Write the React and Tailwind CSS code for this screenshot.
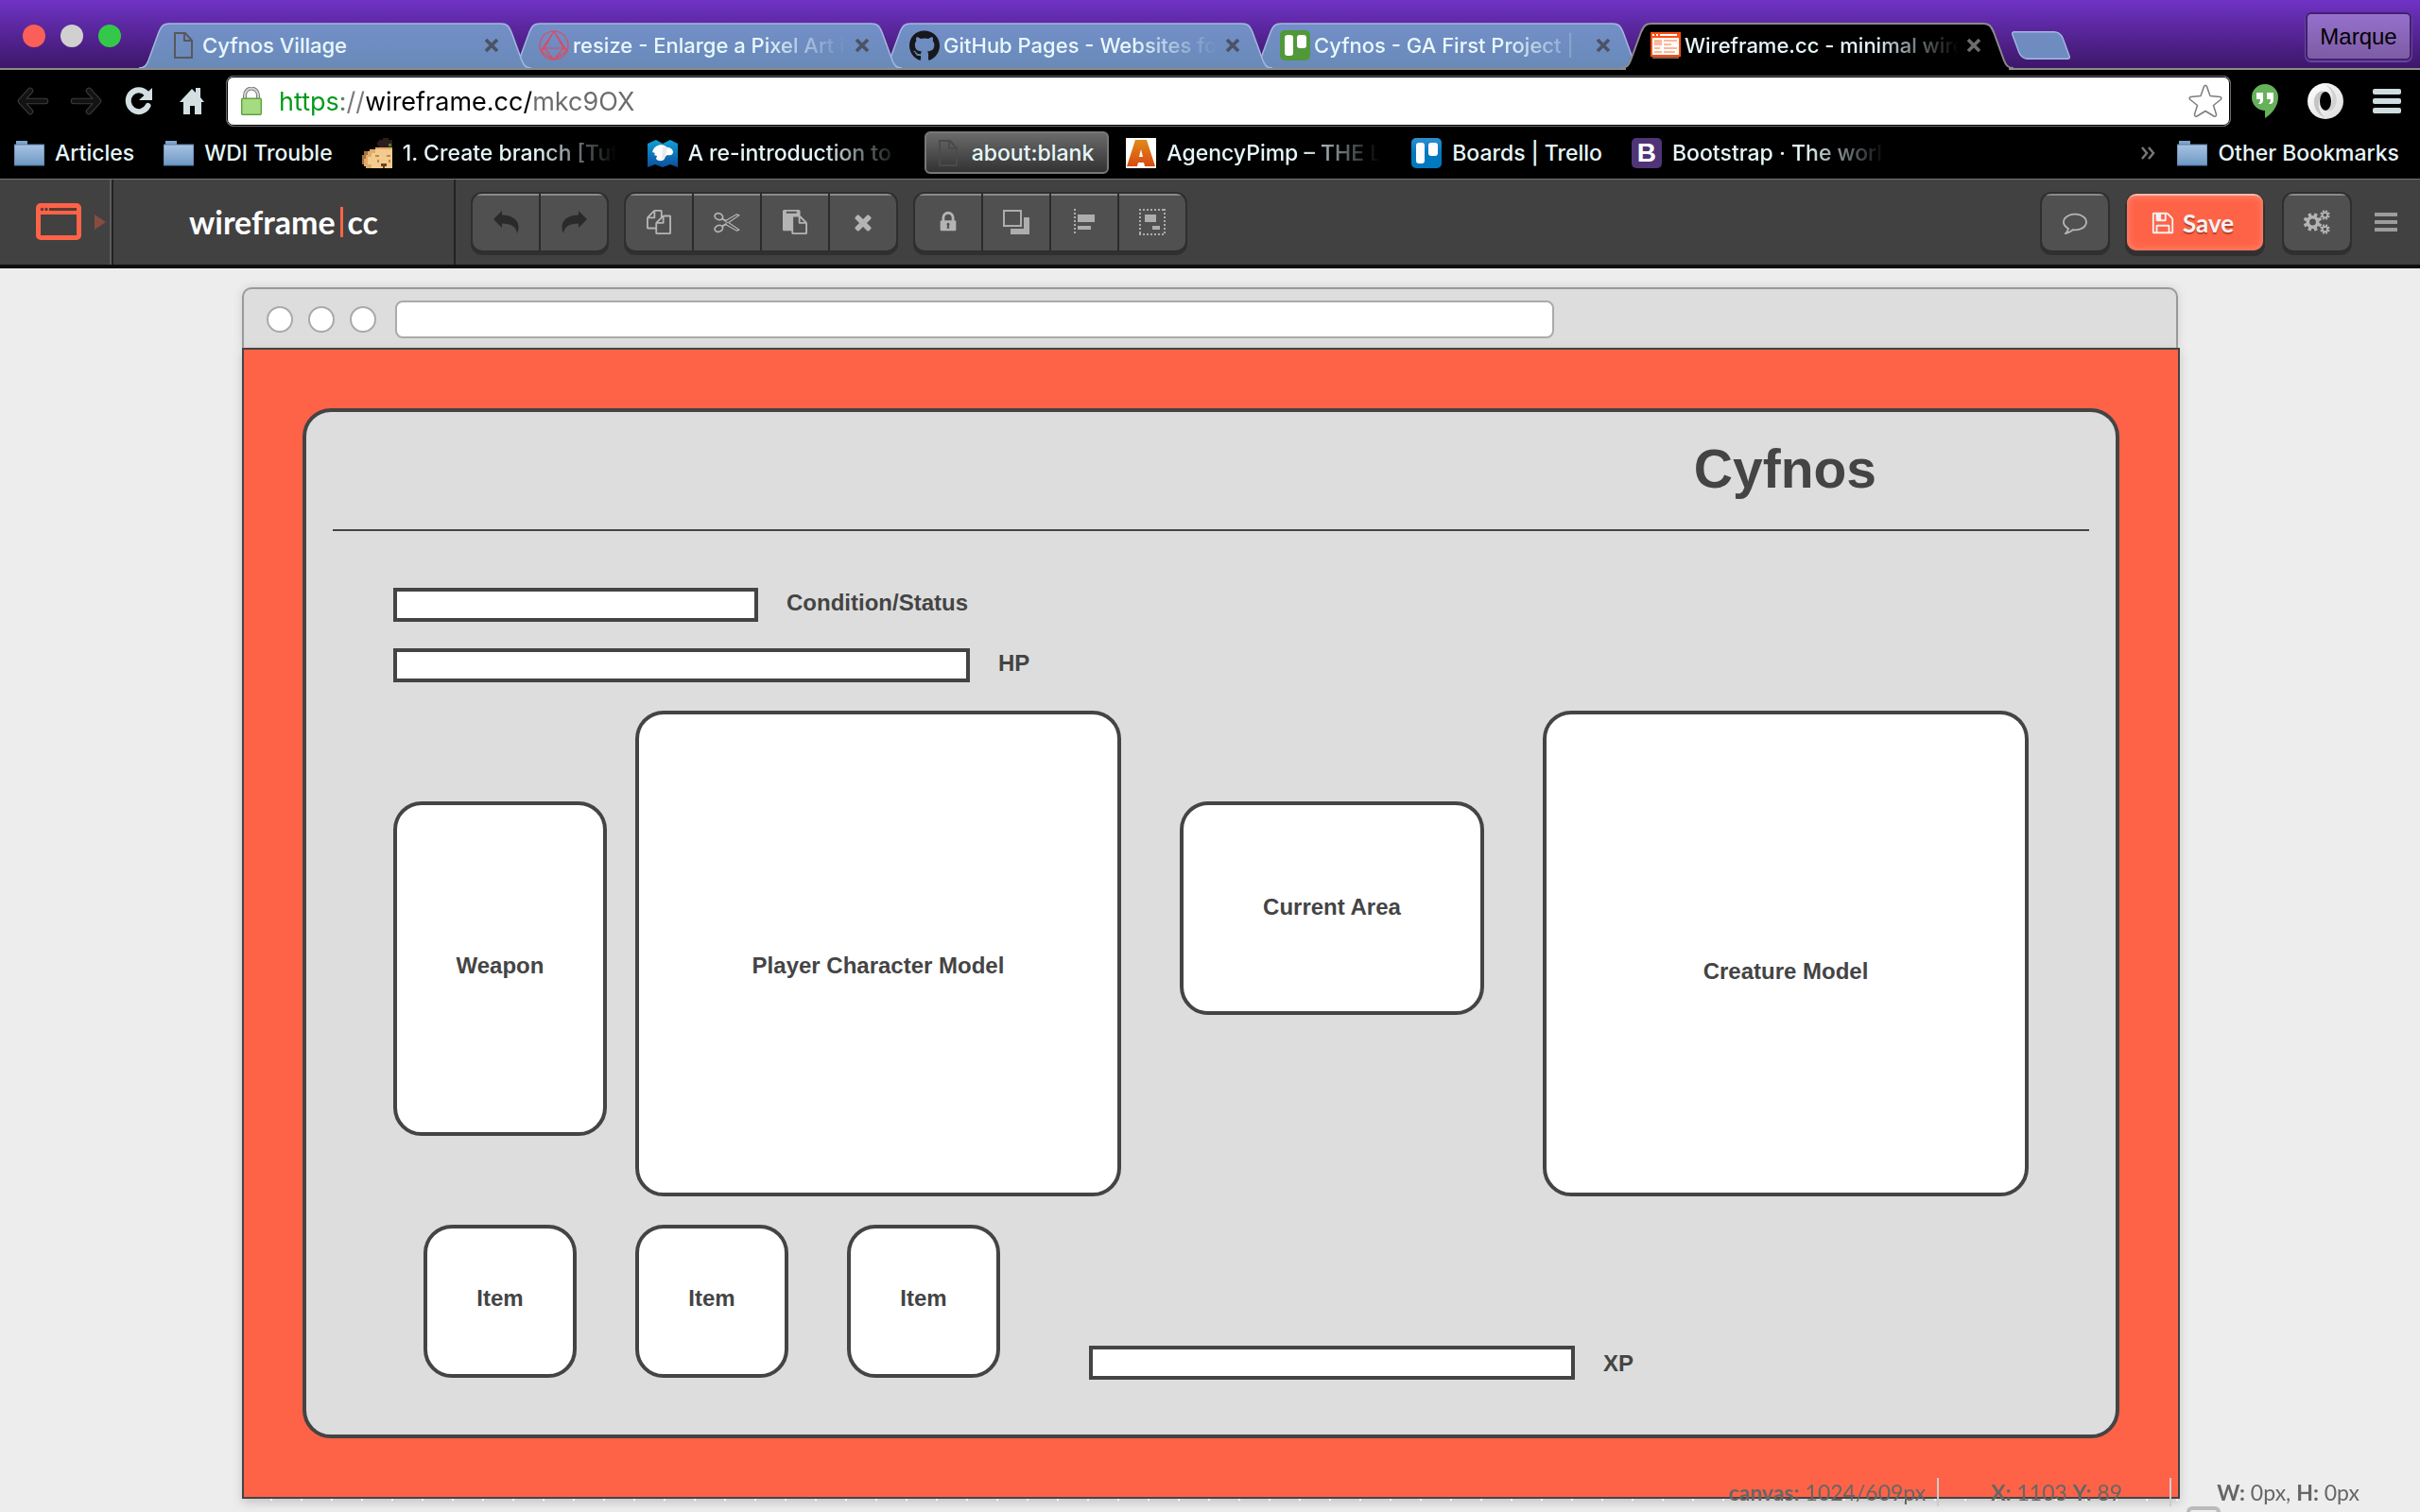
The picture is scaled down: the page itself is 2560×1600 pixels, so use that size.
import React from "react";
import { FaGithub } from "react-icons/fa";

const UI = "font-['Inter',sans-serif]";

/* ---------- browser icons ---------- */

const PageIcon = ({ color = "#57585c" }) => (
  <svg width="32" height="32" viewBox="0 0 32 32" fill="none" stroke={color} strokeWidth="2" aria-hidden="true">
    <path d="M7 3h11l7 8v18H7z" />
    <path d="M17 3v8h8" />
  </svg>
);

const PolyhedronIcon = () => (
  <svg width="32" height="32" viewBox="0 0 32 32" fill="none" stroke="#e0485f" strokeWidth="1.2" aria-hidden="true">
    <circle cx="16" cy="16" r="15" />
    <path d="M16 1L6 19l10 12 10-12zM16 1L2 22M16 1l14 21M6 19h20M2 22l14 9 14-9M2 22l4-3M30 22l-4-3" />
  </svg>
);

const TrelloIcon = ({ from, to }) => (
  <svg width="32" height="32" viewBox="0 0 32 32" aria-hidden="true">
    <defs>
      <linearGradient id={"trello" + to.slice(1)} x1="0" y1="0" x2="0" y2="1">
        <stop offset="0" stopColor={from} />
        <stop offset="0.5" stopColor={to} />
      </linearGradient>
    </defs>
    <rect width="32" height="32" rx="5" fill={"url(#trello" + to.slice(1) + ")"} />
    <rect x="5" y="5" width="9" height="22" rx="3" fill="#fff" />
    <rect x="18" y="5" width="10" height="14" rx="3" fill="#fff" />
  </svg>
);

const WireframeFavicon = () => (
  <svg width="32" height="32" viewBox="0 0 32 32" shapeRendering="crispEdges" aria-hidden="true">
    <path d="M2 28h28v2H2z" fill="#8a5a4a" />
    <path d="M0 2h32v26H0z" fill="#ff4f12" />
    <path d="M2 8h28v18H2zM2 4h2v2H2zM6 4h2v2H6zM10 4h18v2H10z" fill="#fff" />
    <path d="M4 10h8v6H4zM14 10h14v2H14zM14 14h8v2h-8zM4 18h6v2H4zM14 18h14v2H14zM4 22h8v2H4zM14 22h12v2H14z" fill="#ffb798" />
  </svg>
);

const FolderIcon = () => (
  <svg width="32" height="28" viewBox="0 0 32 28" aria-hidden="true">
    <defs>
      <linearGradient id="folder" x1="0" y1="0" x2="0" y2="1">
        <stop offset="0" stopColor="#a9c3e2" />
        <stop offset="1" stopColor="#6d98c4" />
      </linearGradient>
    </defs>
    <path d="M2 1h12v5H2z" fill="#7fa3cd" />
    <path d="M0 5h32v22H0z" fill="url(#folder)" stroke="#557ca6" strokeWidth="1" />
  </svg>
);

const CritterIcon = () => (
  <svg width="32" height="32" viewBox="0 0 32 32" shapeRendering="crispEdges" aria-hidden="true">
    <path d="M18 2h4V0h6v2h4v8H18V8h-2V4h2z" fill="#2b1d1c" />
    <path d="M28 6h3v3h-3z" fill="#4c7a2e" />
    <path d="M14 10h18v22H4v-2H2v-4H0v-8h2v-4h6v-2h6z" fill="#e0ab6a" />
    <path d="M14 12h18v20H10v-4H6v-8h4v-4h4z" fill="#f3cb8e" />
    <path d="M0 18h2v-4h4v4H4v4H2v6H0z" fill="#a8713c" />
    <path d="M14 18h4v2h-4zM26 18h4v2h-4zM16 23h2v3h-2zM28 23h2v3h-2z" fill="#b98850" />
    <path d="M20 27h6v3h-2v2h-2v-2h-2z" fill="#6b3f24" />
  </svg>
);

const DinoIcon = () => (
  <svg width="32" height="32" viewBox="0 0 32 32" aria-hidden="true">
    <defs>
      <linearGradient id="dino" x1="0" y1="0" x2="0" y2="1">
        <stop offset="0" stopColor="#10a0d8" />
        <stop offset="1" stopColor="#0d4f9e" />
      </linearGradient>
    </defs>
    <path d="M0 6l9-4 7 4 8-4 8 4v25l-8-3-8 3-8-3-8 3z" fill="url(#dino)" />
    <path d="M9 9c4-3 9-2 12 1 3 0 6 2 6 5 0 2-2 4-5 3-2 0-3 1-4 4-2 3-7 3-9 0l1-3-3-1 1-2-3-1c1-3 2-5 4-6z" fill="#fff" />
    <path d="M16 9l5 1-2 9-4 4z" fill="#e6e9ee" />
  </svg>
);

const BlockAIcon = () => (
  <span className="flex h-8 w-8 items-center justify-center bg-white">
    <svg width="30" height="28" viewBox="0 0 30 28" aria-hidden="true">
      <defs>
        <linearGradient id="block" x1="0" y1="0" x2="0" y2="1">
          <stop offset="0" stopColor="#e08a1c" />
          <stop offset="1" stopColor="#d94a10" />
        </linearGradient>
      </defs>
      <polygon points="9,0 21,0 30,28 19,28 18,24 12,24 11,28 0,28" fill="url(#block)" />
      <polygon points="15,10 17,18 13,18" fill="#fff" />
    </svg>
  </span>
);

const BIcon = () => (
  <span className="flex h-8 w-8 items-center justify-center rounded-[5px] bg-[#4f3577] font-['Liberation_Sans',sans-serif] text-[28px] leading-8 font-bold text-white">
    B
  </span>
);

const CloseIcon = ({ active }) => (
  <svg width="16" height="16" viewBox="0 0 16 16" aria-hidden="true">
    <path d="M2 2l12 12M14 2L2 14" stroke={active ? "#6d6d6d" : "#4b5263"} strokeWidth="3.6" />
  </svg>
);

/* ---------- tabs ---------- */

const TAB_PATH =
  "M0 48C6 48 8 45 10 40L21 10C24 3 26 1 32 1H383C389 1 391 3 394 10L405 40C407 45 409 48 415 48";

function Tab({ icon, title, layer, active, fade = true }) {
  return (
    <div className={"relative -mr-[23px] flex h-12 min-w-0 max-w-[415px] flex-1 items-center pr-[30px] pl-[31px] " + layer}>
      <svg
        className={active ? "absolute top-0 left-0 h-[50px] w-full" : "absolute inset-0 h-full w-full"}
        viewBox={active ? "0 0 415 50" : "0 0 415 48"}
        preserveAspectRatio="none"
        aria-hidden="true"
      >
        <defs>
          <linearGradient id="tabfill" x1="0" y1="0" x2="0" y2="1">
            <stop offset="0" stopColor="#738fc8" />
            <stop offset="1" stopColor="#698ab8" />
          </linearGradient>
        </defs>
        {active && <path d="M5 47h405v3H5z" fill="#000" />}
        <path
          d={TAB_PATH}
          fill={active ? "#000" : "url(#tabfill)"}
          stroke={active ? "#8b8b8b" : "#a5b8de"}
          strokeWidth={active ? 2 : 1.5}
        />
      </svg>
      <span className="relative flex h-8 w-8 shrink-0 items-center justify-center">{icon}</span>
      <span
        className={
          "relative ml-1 min-w-0 overflow-hidden text-[22px] leading-8 font-medium whitespace-nowrap text-[#e8f8fc] " +
          (fade ? "[mask-image:linear-gradient(to_right,black_200px,transparent_290px)]" : "")
        }
      >
        {title}
      </span>
      <button type="button" aria-label={"Close " + title} className="relative ml-auto flex h-6 w-6 shrink-0 items-center justify-center">
        <CloseIcon active={active} />
      </button>
    </div>
  );
}

function TabStrip() {
  return (
    <header className="flex h-[74px] items-stretch border-b-2 border-[#8b8b8b] bg-linear-to-b from-[#7033c6] to-[#3d1769]">
      <div className="mt-[26px] mr-[19px] ml-6 flex h-6 shrink-0 gap-4">
        <button type="button" aria-label="Close window" className="h-6 w-6 rounded-full bg-[#fc5f58]" />
        <button type="button" aria-label="Minimise window" className="h-6 w-6 rounded-full bg-[#d0d0d0]" />
        <button type="button" aria-label="Zoom window" className="h-6 w-6 rounded-full bg-[#34c84a]" />
      </div>
      <nav aria-label="Tabs" className="mt-6 flex min-w-0 flex-1">
        <Tab layer="z-40" icon={<PageIcon />} title="Cyfnos Village" fade={false} />
        <Tab layer="z-30" icon={<PolyhedronIcon />} title="resize - Enlarge a Pixel Art i" />
        <Tab layer="z-20" icon={<FaGithub size={33} color="#16181c" />} title="GitHub Pages - Websites fo" />
        <Tab layer="z-10" icon={<TrelloIcon from="#519839" to="#519839" />} title="Cyfnos - GA First Project |" />
        <Tab layer="z-50" icon={<WireframeFavicon />} title="Wireframe.cc - minimal wire" active />
        <button type="button" aria-label="New tab" className="mt-[9px] ml-[21px] h-[30px] w-[62px] shrink-0">
          <svg width="62" height="30" viewBox="0 0 62 30" aria-hidden="true">
            <path d="M3 .7H45C50 .7 52 3 54 7L61 26C62 28 61 29.300 59 29.300H17C12 29.300 10 27 8 23L1 4C0 2 1 .7 3 .7Z" fill="#6e8cc0" stroke="#a5b8de" strokeWidth="1.4" />
          </svg>
        </button>
      </nav>
      <button
        type="button"
        className="mt-[13px] mr-[9px] h-[51px] w-28 shrink-0 rounded-md border-2 border-[#43206f] bg-linear-to-b from-[#9670cd] to-[#7d5ca4] font-['Liberation_Sans',sans-serif] text-[24px] text-black shadow-[0_1px_0_1px_#6a44a0]"
      >
        Marque
      </button>
    </header>
  );
}

/* ---------- address bar ---------- */

const NavButton = ({ label, children }) => (
  <button type="button" aria-label={label} className="flex h-9 w-9 items-center justify-center">
    {children}
  </button>
);

function AddressBar() {
  return (
    <div className="flex h-[62px] items-center bg-black pt-1 pr-5 pl-[17px]">
      <div className="mr-[18px] flex shrink-0 gap-5">
        <NavButton label="Back">
          <svg width="34" height="30" viewBox="0 0 34 30" fill="none" strokeLinecap="round" strokeLinejoin="round" aria-hidden="true">
            <path d="M14 4L4 15l10 11M5 15h25" stroke="#3c3c3c" strokeWidth="6.500" />
            <path d="M14 4L4 15l10 11M5 15h25" stroke="#131313" strokeWidth="4.500" />
          </svg>
        </NavButton>
        <NavButton label="Forward">
          <svg width="34" height="30" viewBox="0 0 34 30" fill="none" strokeLinecap="round" strokeLinejoin="round" aria-hidden="true">
            <path d="M20 4l10 11-10 11M29 15H4" stroke="#3c3c3c" strokeWidth="6.500" />
            <path d="M20 4l10 11-10 11M29 15H4" stroke="#131313" strokeWidth="4.500" />
          </svg>
        </NavButton>
        <NavButton label="Reload">
          <svg width="30" height="30" viewBox="0 0 30 30" aria-hidden="true">
            <path d="M23 7A11 11.500 0 1 0 24.500 20" fill="none" stroke="#d3dfe2" strokeWidth="6" strokeLinecap="round" />
            <path d="M29 1v13H15z" fill="#d3dfe2" />
          </svg>
        </NavButton>
        <NavButton label="Home">
          <svg width="26" height="30" viewBox="0 0 26 30" fill="#d3dfe2" aria-hidden="true">
            <path d="M13 2l4 4V1h5v10l4 5h-3v13h-7v-9h-5v9H4V16H0z" />
          </svg>
        </NavButton>
      </div>
      <div className="flex h-[54px] min-w-0 flex-1 items-center rounded-lg border border-[#6a6a6a] bg-white pr-2 pl-[15px] outline-1 -outline-offset-2 outline-black">
        <svg width="22" height="30" viewBox="0 0 22 30" className="shrink-0" aria-hidden="true">
          <path d="M4 13V9a7 7.500 0 0 1 14 0v4" fill="none" stroke="#7d7d7d" strokeWidth="4" />
          <path d="M4 13V9a7 7.500 0 0 1 14 0v4" fill="none" stroke="#d4d4d4" strokeWidth="2" />
          <rect x=".7" y="12.200" width="20.600" height="17" rx="1" fill="#a5dc7f" stroke="#5fa142" strokeWidth="1.400" />
        </svg>
        <input
          type="text"
          aria-label="Address"
          defaultValue="https://wireframe.cc/mkc9OX"
          className="ml-[18px] h-11 min-w-0 flex-1 bg-[linear-gradient(to_right,#009a17_67px,#777_67px,#777_93px,#000_93px,#000_269px,#6b6b6b_269px)] bg-clip-text text-[27px] text-transparent outline-none"
        />
        <button type="button" aria-label="Bookmark this page" className="flex h-9 w-9 shrink-0 items-center justify-center">
          <svg width="36" height="36" viewBox="0 0 36 36" fill="#fff" stroke="#7c7c7c" strokeWidth="1.500" strokeLinejoin="round" aria-hidden="true">
            <path d="M16.500 2.500Q18 0 19.500 2.500L23 12.500 33.500 13.500Q36 14.500 34 16.500L26.500 22.500 29.500 32Q29.500 35 27 34L18 28.500 9 34Q6.500 35 6.500 32L9.500 22.500 2 16.500Q0 14.500 2.500 13.500L13 12.500Z" />
          </svg>
        </button>
      </div>
      <div className="ml-[22px] flex shrink-0 items-center gap-[31px]">
        <button type="button" aria-label="Hangouts">
          <svg width="28" height="36" viewBox="0 0 28 36" aria-hidden="true">
            <path d="M14 0a14 14 0 0 1 14 14c0 9-6 17-14 22v-8A14 14 0 0 1 14 0z" fill="#65b25a" />
            <path d="M5 9h7v8q0 3-3 4H7q2-2 2-5H5zM16 9h7v8q0 3-3 4h-2q2-2 2-5h-4z" fill="#fff" />
          </svg>
        </button>
        <button type="button" aria-label="JSON viewer">
          <svg width="38" height="38" viewBox="0 0 38 38" aria-hidden="true">
            <defs>
              <linearGradient id="ring" x1="0" y1="0" x2="1" y2="1">
                <stop offset="0" stopColor="#fff" />
                <stop offset="1" stopColor="#dcdcdc" />
              </linearGradient>
            </defs>
            <circle cx="19" cy="19" r="19" fill="url(#ring)" />
            <path d="M19 9c-8-3-15 6-11 17 2 5 6 9 11 10C10 31 9 15 19 9z" fill="#c4c4c4" />
            <path d="M19 29c8 3 14-6 11-16-2-6-6-10-11-11 10 6 10 21 0 27z" fill="#d2d2d2" />
            <ellipse cx="19" cy="19" rx="6" ry="10" fill="#000" />
          </svg>
        </button>
        <button type="button" aria-label="Menu" className="flex flex-col gap-1">
          <span className="h-[6px] w-[30px] rounded-[2px] bg-[#cfdce0]" />
          <span className="h-[6px] w-[30px] rounded-[2px] bg-[#cfdce0]" />
          <span className="h-[6px] w-[30px] rounded-[2px] bg-[#cfdce0]" />
        </button>
      </div>
    </div>
  );
}

/* ---------- bookmarks ---------- */

function Bookmark({ icon, children, fade }) {
  return (
    <a href="#" className="flex shrink-0 items-center gap-[11px]">
      {icon}
      <span className={fade ? "w-[228px] [mask-image:linear-gradient(to_right,black_62%,transparent_99%)]" : ""}>
        {children}
      </span>
    </a>
  );
}

function BookmarksBar() {
  return (
    <nav
      aria-label="Bookmarks"
      className="flex h-[54px] items-center gap-[31px] border-b border-[#757575] bg-black pr-[22px] pb-[2px] pl-[15px] text-[23px] leading-8 font-medium whitespace-nowrap text-[#e6f6f9]"
    >
      <Bookmark icon={<FolderIcon />}>Articles</Bookmark>
      <Bookmark icon={<FolderIcon />}>WDI Trouble</Bookmark>
      <Bookmark icon={<CritterIcon />} fade>1. Create branch [Tut</Bookmark>
      <Bookmark icon={<DinoIcon />} fade>A re-introduction to</Bookmark>
      <a
        href="#"
        className="-mr-[13px] -ml-[9px] flex h-[45px] shrink-0 items-center gap-[9px] rounded-md border-2 border-[#777] bg-linear-to-b from-[#6b6b6b] to-[#333] pr-[14px] pl-[7px]"
      >
        <PageIcon color="#4a4a4a" />
        about:blank
      </a>
      <Bookmark icon={<BlockAIcon />} fade>AgencyPimp – THE L</Bookmark>
      <Bookmark icon={<TrelloIcon from="#2f8fd0" to="#0079bf" />}>Boards | Trello</Bookmark>
      <Bookmark icon={<BIcon />} fade>Bootstrap · The worl</Bookmark>
      <button type="button" aria-label="More bookmarks" className="-mr-2 ml-auto">
        <svg width="15" height="14" viewBox="0 0 15 14" fill="none" stroke="#777" strokeWidth="2.500" aria-hidden="true">
          <path d="M1 1l5 6-5 6M8 1l5 6-5 6" />
        </svg>
      </button>
      <Bookmark icon={<FolderIcon />}>Other Bookmarks</Bookmark>
    </nav>
  );
}

/* ---------- editor toolbar ---------- */

const Glyph = ({ d, size = 26, color = "#b4b4b4", children }) => (
  <svg width={size} height={size} viewBox="0 0 1792 1792" fill={color} aria-hidden="true">
    <path d={d} />
    {children}
  </svg>
);

const COPY =
  "M1696 384q40 0 68 28t28 68v1216q0 40-28 68t-68 28h-960q-40 0-68-28t-28-68v-288h-544q-40 0-68-28t-28-68v-672q0-40 20-88t48-76l408-408q28-28 76-48t88-20h416q40 0 68 28t28 68v328q68-40 128-40h416zm-544 213l-299 299h299v-299zm-640-384l-299 299h299v-299zm196 647l316-316v-416h-384v416q0 40-28 68t-68 28h-416v640h512v-256q0-40 20-88t48-76zm956 804v-1152h-384v416q0 40-28 68t-68 28h-416v640h896z";
const PASTE =
  "M768 1664h896v-640h-416q-40 0-68-28t-28-68v-416h-384v1152zm256-1440v-64q0-13-9.500-22.500t-22.500-9.500h-704q-13 0-22.500 9.500t-9.500 22.500v64q0 13 9.500 22.500t22.500 9.500h704q13 0 22.500-9.500t9.500-22.500zm256 672h299l-299-299v299zm512 128v672q0 40-28 68t-68 28h-960q-40 0-68-28t-28-68v-160h-544q-40 0-68-28t-28-68v-1344q0-40 28-68t68-28h1088q40 0 68 28t28 68v328q21 13 36 28l408 408q28 28 48 76t20 88z";
const FLOPPY =
  "M512 1536h768v-384h-768v384zm896 0h128v-896q0-14-10-38.500t-20-34.500l-281-281q-10-10-34-20t-39-10v416q0 40-28 68t-68 28h-576q-40 0-68-28t-28-68v-416h-128v1280h128v-416q0-40 28-68t68-28h832q40 0 68 28t28 68v416zm-384-928v-320q0-13-9.500-22.500t-22.500-9.500h-192q-13 0-22.500 9.500t-9.500 22.500v320q0 13 9.500 22.500t22.500 9.500h192q13 0 22.500-9.500t9.500-22.500zm640 32v928q0 40-28 68t-68 28h-1344q-40 0-68-28t-28-68v-1344q0-40 28-68t68-28h928q40 0 88 20t76 48l280 280q28 28 48 76t20 88z";
const LOCK =
  "M640 768h512v-192q0-106-75-181t-181-75-181 75-75 181v192zm832 96v576q0 40-28 68t-68 28h-960q-40 0-68-28t-28-68v-576q0-40 28-68t68-28h32v-192q0-184 132-316t316-132 316 132 132 316v192h32q40 0 68 28t28 68z";
const TIMES =
  "M1490 1322q0 40-28 68l-136 136q-28 28-68 28t-68-28l-294-294-294 294q-28 28-68 28t-68-28l-136-136q-28-28-28-68t28-68l294-294-294-294q-28-28-28-68t28-68l136-136q28-28 68-28t68 28l294 294 294-294q28-28 68-28t68 28l136 136q28 28 28 68t-28 68l-294 294 294 294q28 28 28 68z";
const COMMENT =
  "M896 384q-204 0-381.500 69.500t-282 187.500-104.500 255q0 112 71.500 213.500t201.500 175.500l87 50-27 96q-24 91-70 172 152-63 275-171l43-38 57 6q69 8 130 8 204 0 381.500-69.500t282-187.500 104.500-255-104.500-255-282-187.500-381.500-69.500zm896 512q0 174-120 321.500t-326 233-450 85.500q-70 0-145-8-198 175-460 242-49 14-114 22h-5q-15 0-27-10.500t-16-27.500v-1q-3-4-.5-12t2-10 4.500-9.500l6-9 7-8.500 8-9q7-8 31-34.500t34.500-38 31-39.500 32.500-51 27-59 26-76q-157-89-247.500-220t-90.500-281q0-174 120-321.500t326-233 450-85.500 450 85.500 326 233 120 321.500z";

const UndoArrow = ({ flip }) => (
  <svg width="27" height="24" viewBox="0 0 27 24" fill="#2a2a2a" className={flip ? "-scale-x-100" : ""} aria-hidden="true">
    <path d="M0 9L9 0v4.500C20 4.500 27 10 26.500 18c0 2-.5 4-1.500 6-1-7-6-10.500-16-10.500V18z" />
  </svg>
);

const Scissors = () => (
  <svg width="28" height="23" viewBox="0 0 84 68" fill="none" stroke="#b4b4b4" strokeWidth="5" aria-hidden="true">
    <ellipse cx="16" cy="15" rx="13" ry="10" transform="rotate(20 16 15)" />
    <ellipse cx="16" cy="53" rx="13" ry="10" transform="rotate(-20 16 53)" />
    <path d="M27 22l13 8M27 46l13-8" strokeWidth="6" />
    <path d="M36 28l6-2 31-18 8 3-34 23 34 23-8 3-31-18-6-2" strokeWidth="3.500" strokeLinejoin="round" />
    <circle cx="42" cy="34" r="2" strokeWidth="3" />
  </svg>
);

const Layers = () => (
  <svg width="28" height="26" viewBox="0 0 28 26" fill="#adadad" aria-hidden="true">
    <path d="M22 8h6v18H8v-6h14z" />
    <path d="M1 1h18v16H1z" fill="none" stroke="#adadad" strokeWidth="2" />
  </svg>
);

const AlignIcon = () => (
  <svg width="22" height="28" viewBox="0 0 22 28" fill="#adadad" aria-hidden="true">
    <path d="M1 0v28" stroke="#adadad" strokeWidth="2" strokeDasharray="2 2" />
    <path d="M4 6h18v8H4zM4 18h14v4H4z" />
  </svg>
);

const GroupIcon = () => (
  <svg width="28" height="28" viewBox="0 0 28 28" fill="#adadad" aria-hidden="true">
    <path d="M0 1h28M0 27h28M1 0v28M27 0v28" stroke="#adadad" strokeWidth="2" strokeDasharray="2 2" />
    <path d="M6 6h12v8H6zM14 18h8v4h-8z" />
  </svg>
);

const Gear = ({ cx, cy, r, hole, tooth, count }) => (
  <g transform={`translate(${cx} ${cy})`}>
    <circle r={(r + hole) / 2} fill="none" stroke="#b4b4b4" strokeWidth={r - hole} />
    {Array.from({ length: count }, (_, i) => (
      <rect key={i} x={-tooth / 2} y={-r - tooth * 0.8} width={tooth} height={tooth * 1.2} fill="#b4b4b4" transform={`rotate(${(360 / count) * i + 180 / count})`} />
    ))}
  </g>
);

const Cogs = () => (
  <svg width="28" height="26" viewBox="0 0 28 26" aria-hidden="true">
    <Gear cx={9.5} cy={13} r={7} hole={3.4} tooth={3.4} count={8} />
    <Gear cx={22.500} cy={5.500} r={3.600} hole={1.800} tooth={2} count={8} />
    <Gear cx={22.500} cy={20.500} r={3.600} hole={1.800} tooth={2} count={8} />
  </svg>
);

const FACE =
  "flex h-[60px] w-[70px] items-center justify-center border-t-2 border-[#8a8a8a] bg-[#505050] pb-[2px]";

function ToolGroup({ tools }) {
  return (
    <div className="flex gap-[2px] overflow-hidden rounded-[10px] bg-[#2b2b2b] shadow-[0_0_0_2px_#2f2f2f,0_3px_0_2px_#303030]">
      {tools.map(([label, icon]) => (
        <button key={label} type="button" aria-label={label} className={FACE}>
          {icon}
        </button>
      ))}
    </div>
  );
}

function EditorToolbar() {
  return (
    <div className="flex h-[94px] items-stretch border-b-4 border-[#0f0f0f] bg-[#414141]">
      <button
        type="button"
        aria-label="Choose device"
        className="flex w-[120px] shrink-0 items-center gap-[14px] border-r-2 border-[#222] pl-[38px] shadow-[inset_-2px_0_0_#5c5c5c]"
      >
        <svg width="48" height="40" viewBox="0 0 48 40" aria-hidden="true">
          <path fillRule="evenodd" d="M5 0h38a5 5 0 0 1 5 5v29a5 5 0 0 1-5 5H5a5 5 0 0 1-5-5V5a5 5 0 0 1 5-5zM5 12v22h38V12z" fill="#ff6347" />
          <path d="M14 5h29v3H14z" fill="#5a3a34" />
          <circle cx="6.500" cy="6.500" r="1.700" fill="#5a3a34" />
          <circle cx="11" cy="6.500" r="1.700" fill="#5a3a34" />
        </svg>
        <svg width="12" height="16" viewBox="0 0 12 16" aria-hidden="true">
          <path d="M0 0l12 8-12 8z" fill="#864c40" />
        </svg>
      </button>
      <a href="#" className="flex w-[362px] shrink-0 items-center justify-center border-r-2 border-[#222] font-['Lato',sans-serif] text-[34px] leading-10 font-bold text-white">
        wireframe<span className="mx-[5px] h-8 w-[3px] bg-[#ff6347]" />cc
      </a>
      <div className="ml-[18px] flex items-center gap-5">
        <ToolGroup tools={[["Undo", <UndoArrow />], ["Redo", <UndoArrow flip />]]} />
        <ToolGroup
          tools={[
            ["Copy", <Glyph d={COPY} />],
            ["Cut", <Scissors />],
            ["Paste", <Glyph d={PASTE} />],
            ["Delete", <Glyph d={TIMES} />],
          ]}
        />
        <ToolGroup
          tools={[
            ["Lock", <Glyph d={LOCK}><path d="M896 950a110 110 0 0 1 60 200l40 210H796l40-210a110 110 0 0 1 60-200z" fill="#505050" /></Glyph>],
            ["Arrange", <Layers />],
            ["Align", <AlignIcon />],
            ["Group", <GroupIcon />],
          ]}
        />
      </div>
      <div className="mr-6 ml-auto flex items-center">
        <ToolGroup tools={[["Comments", <Glyph d={COMMENT} />]]} />
        <button
          type="button"
          className="mr-[22px] ml-5 flex h-[60px] w-36 items-center justify-center gap-2 rounded-[10px] border-t-2 border-[#ffb9aa] bg-[#ff6347] pr-[6px] font-['Lato',sans-serif] text-[26px] font-bold text-[#f2f2f2] shadow-[inset_0_0_8px_#ff8d78,0_0_0_1px_#363636,0_4px_0_2px_#303030] text-shadow-[0_2px_1px_#b5402b]"
        >
          <Glyph d={FLOPPY} color="#f2f2f2" />
          Save
        </button>
        <ToolGroup tools={[["Settings", <Cogs />]]} />
        <button type="button" aria-label="Panel menu" className="ml-[26px] flex flex-col gap-1">
          <span className="h-1 w-6 bg-[#9c9c9c]" />
          <span className="h-1 w-6 bg-[#9c9c9c]" />
          <span className="h-1 w-6 bg-[#9c9c9c]" />
        </button>
      </div>
    </div>
  );
}

/* ---------- wireframe canvas ---------- */

const Box = ({ size, children }) => (
  <div className={"flex shrink-0 justify-center rounded-[30px] border-4 border-[#444] bg-white " + size}>{children}</div>
);

const Meter = ({ size, label, align = "pb-1" }) => (
  <div className="flex items-center gap-[30px]">
    <div className={"h-9 border-4 border-[#444] bg-white " + size} />
    <span className={"-my-1 " + align}>{label}</span>
  </div>
);

function Wireframe() {
  return (
    <main className="mx-auto mt-5 w-4/5">
      <div className="flex h-16 items-center gap-4 rounded-t-[10px] border-x-2 border-t-2 border-[#999] bg-[#ddd] pt-[2px] shadow-[0_0_10px_#d0d0d0]">
        <span className="ml-6 h-7 w-7 rounded-full border-2 border-[#aaa] bg-white" />
        <span className="h-7 w-7 rounded-full border-2 border-[#aaa] bg-white" />
        <span className="h-7 w-7 rounded-full border-2 border-[#aaa] bg-white" />
        <span className="ml-1 h-10 w-3/5 rounded-lg border-2 border-[#aaa] bg-white" />
      </div>
      <div className="-mr-[2px] border-2 border-[#444] bg-[#ff6347] p-[62px] shadow-[0_4px_10px_#c4c4c4]">
        <section className="rounded-[30px] border-4 border-[#444] bg-[#ddd] px-7 pb-[60px] text-[24px] leading-8 font-bold text-[#444]">
          <div className="flex h-[126px] items-center justify-end border-b-2 border-[#444] pr-[225px] pb-1">
            <h1 className="text-[57px] leading-[64px]">Cyfnos</h1>
          </div>
          <div className="px-16 pt-[60px]">
            <div className="flex flex-col gap-7">
              <Meter size="w-[386px]" label="Condition/Status" />
              <Meter size="w-[610px]" label="HP" />
            </div>
            <div className="mt-[30px] flex items-start">
              <div className="mt-24 mr-[30px]"><Box size="h-[354px] w-[226px] pt-[154px]">Weapon</Box></div>
              <Box size="h-[514px] w-[514px] pt-[250px]">Player Character Model</Box>
              <div className="mx-[62px] mt-24"><Box size="h-[226px] w-[322px] pt-[92px]">Current Area</Box></div>
              <Box size="h-[514px] w-[514px] pt-[256px]">Creature Model</Box>
            </div>
            <div className="mt-[30px] flex items-end gap-[62px] pl-8">
              <Box size="h-[162px] w-[162px] pt-[58px]">Item</Box>
              <Box size="h-[162px] w-[162px] pt-[58px]">Item</Box>
              <Box size="h-[162px] w-[162px] pt-[58px]">Item</Box>
              <div className="-mb-[2px] ml-8"><Meter size="w-[514px]" label="XP" align="pt-[2px]" /></div>
            </div>
          </div>
        </section>
      </div>
      <div className="h-[2px] bg-[linear-gradient(to_right,transparent_30px,#fff_30px)] bg-[length:32px_2px]" />
    </main>
  );
}

function StatusBar() {
  return (
    <footer className="fixed right-16 bottom-0 z-10 flex h-9 items-start font-['Lato',sans-serif] text-[23px] leading-[30px] text-[#666]">
      <span className="mr-3"><b>canvas:</b> 1024/609px</span>
      <span className="h-[30px] w-[2px] bg-[#ccc]" />
      <span className="mr-[50px] ml-[55px]"><b>X:</b> 1103 <b>Y:</b> 89</span>
      <span className="h-[30px] w-[2px] bg-[#ccc]" />
      <span className="mt-[30px] ml-4 h-[6px] w-9 rounded-t-md border-x-4 border-t-4 border-[#bbb]" />
      <span className="-ml-1"><b>W:</b> 0px, <b>H:</b> 0px</span>
    </footer>
  );
}

export default function App() {
  return (
    <div className="min-h-screen bg-[#ededed] font-['Liberation_Sans',sans-serif]">
      <div className={UI}>
        <TabStrip />
        <AddressBar />
        <BookmarksBar />
      </div>
      <EditorToolbar />
      <Wireframe />
      <StatusBar />
    </div>
  );
}
